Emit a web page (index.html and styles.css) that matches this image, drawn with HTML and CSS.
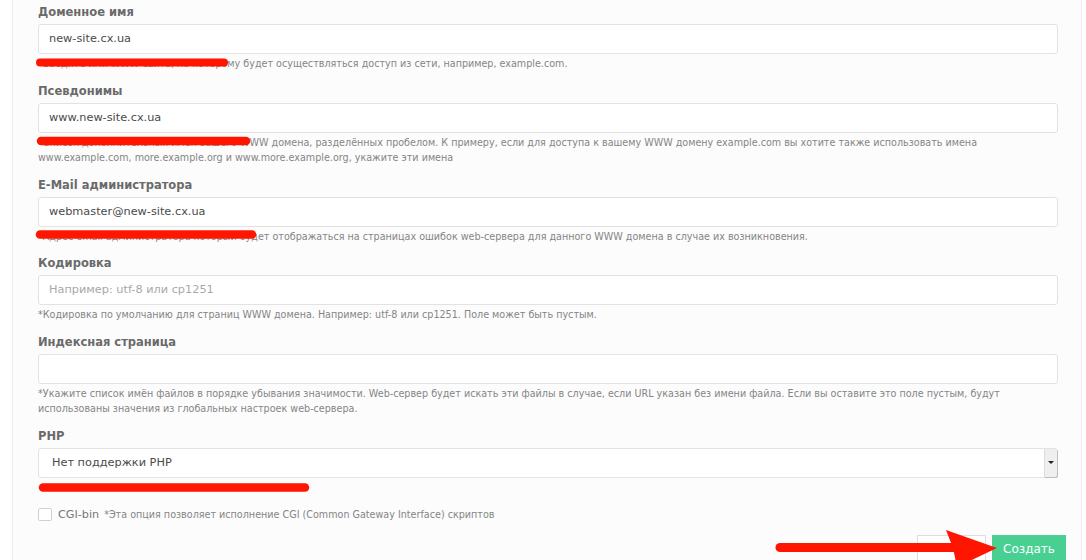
FILE: index.html
```html
<!DOCTYPE html>
<html lang="ru">
<head>
<meta charset="utf-8">
<title>WWW домен</title>
<link rel="stylesheet" href="styles.css">
</head>
<body>
<div class="page">
  <form class="panel">
    <div class="group">
      <label class="label">Доменное имя</label>
      <div class="input">new-site.cx.ua</div>
      <div class="help">*Введите имя WWW сайта, по которому будет осуществляться доступ из сети, например, example.com.</div>
    </div>
    <div class="group">
      <label class="label">Псевдонимы</label>
      <div class="input">www.new-site.cx.ua</div>
      <div class="help">*Список дополнительных имён вашего WWW домена, разделённых пробелом. К примеру, если для доступа к вашему WWW домену example.com вы хотите также использовать имена www.example.com, more.example.org и www.more.example.org, укажите эти имена</div>
    </div>
    <div class="group">
      <label class="label">E-Mail администратора</label>
      <div class="input">webmaster@new-site.cx.ua</div>
      <div class="help">*Адрес email администратора который будет отображаться на страницах ошибок web-сервера для данного WWW домена в случае их возникновения.</div>
    </div>
    <div class="group">
      <label class="label">Кодировка</label>
      <div class="input placeholder">Например: utf-8 или cp1251</div>
      <div class="help">*Кодировка по умолчанию для страниц WWW домена. Например: utf-8 или cp1251. Поле может быть пустым.</div>
    </div>
    <div class="group">
      <label class="label">Индексная страница</label>
      <div class="input"></div>
      <div class="help">*Укажите список имён файлов в порядке убывания значимости. Web-сервер будет искать эти файлы в случае, если URL указан без имени файла. Если вы оставите это поле пустым, будут использованы значения из глобальных настроек web-сервера.</div>
    </div>
    <div class="group group-php">
      <label class="label">PHP</label>
      <div class="select">
        <span class="select-value">Нет поддержки PHP</span>
        <span class="select-btn"><span class="caret"></span></span>
      </div>
    </div>
    <div class="check-row">
      <span class="checkbox"></span>
      <span class="check-label">CGI-bin</span>
      <span class="check-help">*Эта опция позволяет исполнение CGI (Common Gateway Interface) скриптов</span>
    </div>
    <div class="actions">
      <button type="button" class="btn btn-cancel">Отмена</button>
      <button type="button" class="btn btn-ok">Создать</button>
    </div>
  </form>
  <svg class="marks" width="1086" height="560" viewBox="0 0 1086 560" aria-hidden="true">
    <g stroke="#ff1500" stroke-linecap="round" fill="none">
      <path d="M40 62.5 L224 62.5" stroke-width="8"/>
      <path d="M41 141 L246 141" stroke-width="8.5"/>
      <path d="M40 234.5 L252 234.5" stroke-width="8.5"/>
      <path d="M43 487.5 L305 487.5" stroke-width="8.5"/>
      <path d="M780 547.5 L962 547.5" stroke-width="9"/>
    </g>
    <polygon points="946,530 997,548 957,567 953,548" fill="#ff1500"/>
  </svg>
</div>
</body>
</html>
```

FILE: styles.css
```css
* { box-sizing: border-box; }

html, body {
  margin: 0;
  padding: 0;
  background: #ffffff;
  font-family: "DejaVu Sans", "Noto Sans", sans-serif;
  overflow: hidden;
}

.page {
  position: relative;
  width: 1086px;
  height: 560px;
  padding-left: 12px;
  padding-right: 4px;
}

.panel {
  height: 100%;
  background: #fcfcfc;
  border-left: 1px solid #ececec;
  border-right: 1px solid #ececec;
  padding: 4px 23px 0 25px;
}

.group {
  margin-bottom: 11px;
}

.label {
  display: block;
  height: 16px;
  line-height: 16px;
  margin-bottom: 4px;
  font-size: 11.5px;
  font-weight: bold;
  color: #6a6a6a;
}

.input {
  height: 30px;
  border: 1px solid #e2e2e2;
  border-radius: 3px;
  background: #ffffff;
  padding: 0 10px;
  line-height: 28px;
  font-size: 11.3px;
  color: #4a4a4a;
}

.input.placeholder {
  color: #a8a8a8;
}

.help {
  margin-top: 2px;
  font-size: 9.6px;
  line-height: 15.5px;
  color: #858585;
}

.group-php {
  margin-bottom: 29px;
}

.select {
  display: flex;
  height: 30px;
  border: 1px solid #e2e2e2;
  border-radius: 3px;
  background: #ffffff;
  font-size: 11.3px;
  color: #4a4a4a;
}

.select-value {
  flex: 1;
  padding-left: 13px;
  line-height: 28px;
}

.select-btn {
  width: 13px;
  display: flex;
  align-items: center;
  justify-content: center;
  background: #efefef;
  border-left: 1px solid #dcdcdc;
  border-radius: 0 2px 2px 0;
  box-shadow: 1px 1px 0 #bdbdbd;
}

.caret {
  width: 0;
  height: 0;
  border-left: 3px solid transparent;
  border-right: 3px solid transparent;
  border-top: 3px solid #222;
}

.check-row {
  display: flex;
  align-items: center;
  height: 16px;
}

.checkbox {
  width: 14px;
  height: 13px;
  border: 1px solid #d0d0d0;
  border-radius: 2px;
  background: #ffffff;
  margin-right: 6px;
}

.check-label {
  font-size: 11.2px;
  color: #777777;
  margin-right: 5px;
}

.check-help {
  font-size: 9.6px;
  color: #858585;
}

.actions {
  display: flex;
  justify-content: flex-end;
  gap: 6px;
  margin-top: 12px;
  margin-right: -8px;
}

.btn {
  height: 30px;
  border-radius: 0;
  font-family: "DejaVu Sans", sans-serif;
  font-size: 12px;
  padding: 0;
}

.btn-cancel {
  width: 69px;
  border: 1px solid #dedede;
  background: #ffffff;
  color: #ffffff;
}

.btn-ok {
  width: 74px;
  border: none;
  background: #48d093;
  color: #ffffff;
  padding-bottom: 2px;
}

.marks {
  position: absolute;
  left: 0;
  top: 0;
  pointer-events: none;
}
```
